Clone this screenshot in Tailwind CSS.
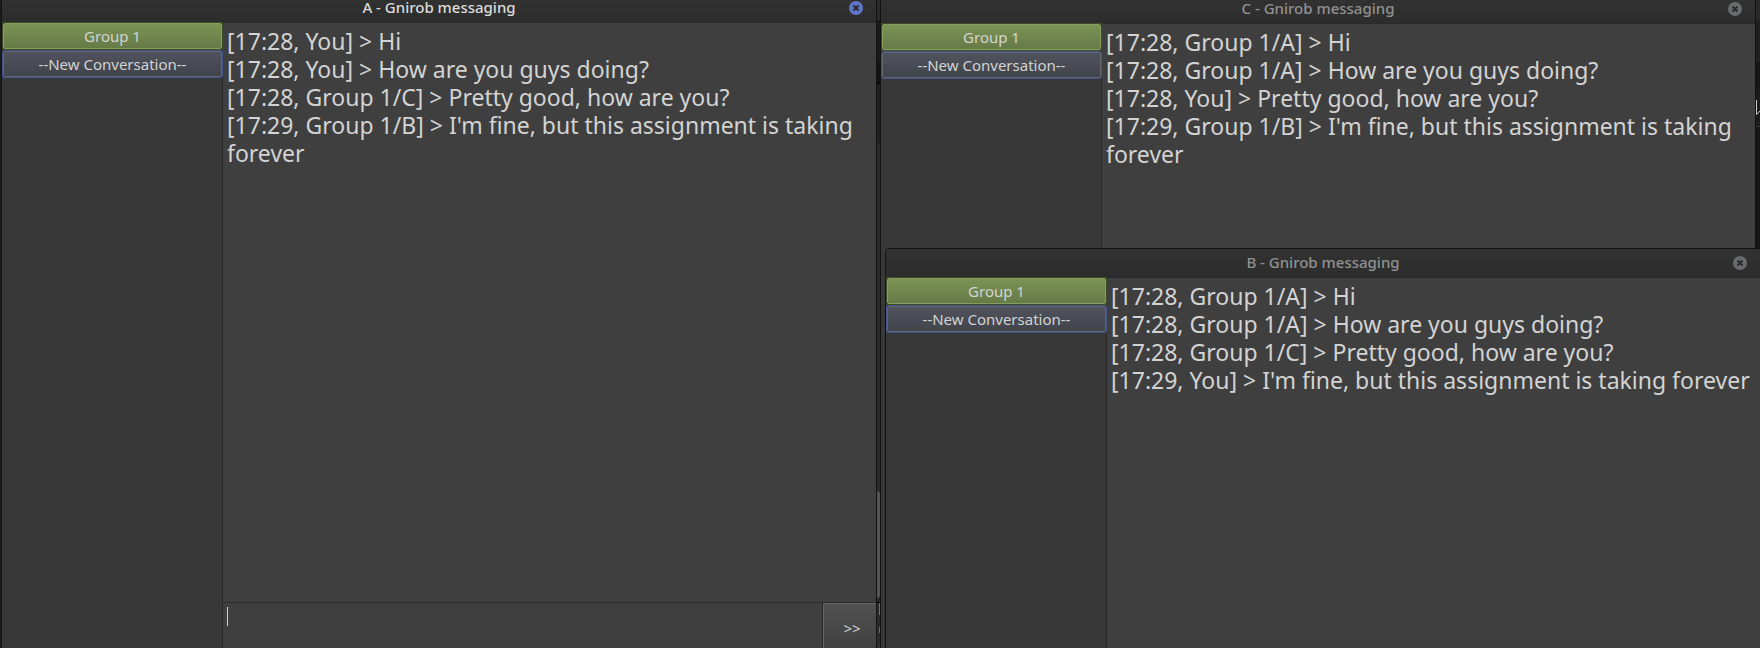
<!DOCTYPE html>
<html lang="en">
<head>
<meta charset="utf-8">
<title>Gnirob messaging</title>
<script src="https://cdn.jsdelivr.net/npm/@tailwindcss/browser@4"></script>
</head>
<body class="bg-[#1c1c1c] font-['Noto_Sans',sans-serif] text-[#d3d3d3]">
<main class="relative h-screen w-full overflow-hidden">

  <!-- Slivers of the windows behind -->
  <div class="absolute inset-y-0 left-[calc(50%-3px)] flex w-[3px] flex-col" aria-hidden="true">
    <div class="h-5 bg-[#2a2a2a]"></div>
    <div class="h-[42px] bg-[#1a1a1a]"></div>
    <div class="h-[21px] bg-[#131313]"></div>
    <div class="h-px bg-black"></div>
    <div class="h-[59px] bg-[#202020]"></div>
    <div class="h-[348px] bg-[#2c2c2c]"></div>
    <div class="h-[107px] rounded-r-sm bg-[#555555]"></div>
    <div class="h-1 bg-[#2c2c2c]"></div>
    <div class="h-px bg-black"></div>
    <div class="flex grow flex-col items-end bg-[#2a2a2a]">
      <div class="h-3 w-px bg-[#4e9a06]"></div>
      <div class="mt-3 h-1.5 w-px bg-[#4a6fae]"></div>
      <div class="mt-3 h-[3px] w-px bg-[#24406e]"></div>
    </div>
  </div>
  <div class="absolute inset-y-0 right-0 flex w-1 flex-col" aria-hidden="true">
    <div class="h-5 bg-[#2a2a2a]"></div>
    <div class="h-[42px] bg-[#1f1f1f]"></div>
    <div class="h-[27px] bg-[#151515]"></div>
    <div class="flex h-[38px] items-center border-b border-[#383838] bg-[#1c1c1c]">
      <svg class="h-4 w-1" viewBox="0 0 4 16" fill="none" stroke="#c8c8c8"><path d="M.5 0v14.5L4 11"/></svg>
    </div>
    <div class="grow bg-[#161616]"></div>
  </div>

  <!-- Window A -->
  <section class="absolute -top-[7px] -bottom-1 left-px flex w-[calc(50%-4px)] flex-col border border-[#121212] bg-[#383838]">
    <header class="flex h-7 shrink-0 items-center bg-linear-to-b from-[#323232] to-[#2d2d2d] px-[13px]">
      <span class="w-3.5"></span>
      <h1 class="grow pb-0.5 text-center text-[15px] leading-5 font-medium text-[#dcdcdc]">A - Gnirob messaging</h1>
      <button type="button" aria-label="Close" class="size-3.5">
        <svg class="size-3.5" viewBox="0 0 14 14"><circle cx="7" cy="7" r="7" fill="#5f76cb"/><path d="M4.5 4.5l5 5m0-5l-5 5" stroke="#2b2b2b" stroke-width="2"/></svg>
      </button>
    </header>
    <div class="flex min-h-0 grow">
      <nav class="w-[221px] shrink-0 border-r border-[#2a2a2a] text-[15px] leading-5">
        <button type="button" class="block h-7 w-[221px] border border-[#3d4c27]"><span class="flex h-full items-center justify-center rounded-xs border border-[#849e5b] bg-linear-to-b from-[#7b9354] to-[#667a47]">Group 1</span></button>
        <button type="button" class="block h-7 w-[221px] rounded-xs border border-[#42528a]"><span class="flex h-full items-center justify-center rounded-xs border border-[#62656d] bg-linear-to-b from-[#50535d] to-[#41444b]">--New Conversation--</span></button>
      </nav>
      <div class="flex min-w-0 grow flex-col bg-[#3f3f3f]">
        <ol class="grow border-t border-[#2a2a2a] px-1 pt-1 text-[23px] leading-7">
          <li>[17:28, You] &gt; Hi</li>
          <li>[17:28, You] &gt; How are you guys doing?</li>
          <li>[17:28, Group 1/C] &gt; Pretty good, how are you?</li>
          <li>[17:29, Group 1/B] &gt; I'm fine, but this assignment is taking forever</li>
        </ol>
        <form class="flex h-[49px] shrink-0 border-t border-[#2a2a2a]">
          <div class="relative grow">
            <textarea aria-label="Message" class="size-full resize-none bg-transparent px-1 py-1 text-[15px] leading-5 caret-transparent outline-none"></textarea>
            <span class="absolute top-1 left-1 h-[19px] w-px bg-[#d3d3d3]"></span>
          </div>
          <button type="button" class="w-[54px] border-l border-[#2a2a2a] text-[15px] leading-5"><span class="flex h-full items-center justify-center rounded-tl-xs border-t border-l border-[#666666] bg-linear-to-b from-[#505050] to-[#404040] pl-1">&gt;&gt;</span></button>
        </form>
      </div>
    </div>
  </section>

  <!-- Window C -->
  <section class="absolute -top-1.5 right-1 -bottom-1.5 left-1/2 flex flex-col border border-[#121212] bg-[#383838]">
    <header class="flex h-7 shrink-0 items-center bg-linear-to-b from-[#323232] to-[#2d2d2d] px-[13px]">
      <span class="w-3.5"></span>
      <h1 class="grow pb-0.5 text-center text-[15px] leading-5 font-medium text-[#919191]">C - Gnirob messaging</h1>
      <button type="button" aria-label="Close" class="size-3.5">
        <svg class="size-3.5" viewBox="0 0 14 14"><circle cx="7" cy="7" r="7" fill="#6a6b6e"/><path d="M4.5 4.5l5 5m0-5l-5 5" stroke="#2b2b2b" stroke-width="2"/></svg>
      </button>
    </header>
    <div class="flex min-h-0 grow">
      <nav class="w-[221px] shrink-0 border-r border-[#2a2a2a] text-[15px] leading-5">
        <button type="button" class="block h-7 w-[221px] border border-[#3d4c27]"><span class="flex h-full items-center justify-center rounded-xs border border-[#849e5b] bg-linear-to-b from-[#7b9354] to-[#667a47]">Group 1</span></button>
        <button type="button" class="block h-7 w-[221px] rounded-xs border border-[#42528a]"><span class="flex h-full items-center justify-center rounded-xs border border-[#62656d] bg-linear-to-b from-[#50535d] to-[#41444b]">--New Conversation--</span></button>
      </nav>
      <ol class="min-w-0 grow border-t border-[#2a2a2a] bg-[#3f3f3f] px-1 pt-1 text-[23px] leading-7">
        <li>[17:28, Group 1/A] &gt; Hi</li>
        <li>[17:28, Group 1/A] &gt; How are you guys doing?</li>
        <li>[17:28, You] &gt; Pretty good, how are you?</li>
        <li>[17:29, Group 1/B] &gt; I'm fine, but this assignment is taking forever</li>
      </ol>
    </div>
  </section>

  <!-- Window B -->
  <section class="absolute top-[248px] -right-px -bottom-1.5 left-[calc(50%+5px)] flex flex-col overflow-hidden rounded-t-sm border border-[#121212] bg-[#383838]">
    <header class="flex h-7 shrink-0 items-center bg-linear-to-b from-[#323232] to-[#2d2d2d] px-[13px]">
      <span class="w-3.5"></span>
      <h1 class="grow pb-0.5 text-center text-[15px] leading-5 font-medium text-[#919191]">B - Gnirob messaging</h1>
      <button type="button" aria-label="Close" class="size-3.5">
        <svg class="size-3.5" viewBox="0 0 14 14"><circle cx="7" cy="7" r="7" fill="#6a6b6e"/><path d="M4.5 4.5l5 5m0-5l-5 5" stroke="#2b2b2b" stroke-width="2"/></svg>
      </button>
    </header>
    <div class="flex min-h-0 grow">
      <nav class="w-[221px] shrink-0 border-r border-[#2a2a2a] text-[15px] leading-5">
        <button type="button" class="block h-7 w-[221px] border border-[#3d4c27]"><span class="flex h-full items-center justify-center rounded-xs border border-[#849e5b] bg-linear-to-b from-[#7b9354] to-[#667a47]">Group 1</span></button>
        <button type="button" class="block h-7 w-[221px] rounded-xs border border-[#42528a]"><span class="flex h-full items-center justify-center rounded-xs border border-[#62656d] bg-linear-to-b from-[#50535d] to-[#41444b]">--New Conversation--</span></button>
      </nav>
      <ol class="min-w-0 grow border-t border-[#2a2a2a] bg-[#3f3f3f] px-1 pt-1 text-[23px] leading-7">
        <li>[17:28, Group 1/A] &gt; Hi</li>
        <li>[17:28, Group 1/A] &gt; How are you guys doing?</li>
        <li>[17:28, Group 1/C] &gt; Pretty good, how are you?</li>
        <li>[17:29, You] &gt; I'm fine, but this assignment is taking forever</li>
      </ol>
    </div>
  </section>
</main>
</body>
</html>
